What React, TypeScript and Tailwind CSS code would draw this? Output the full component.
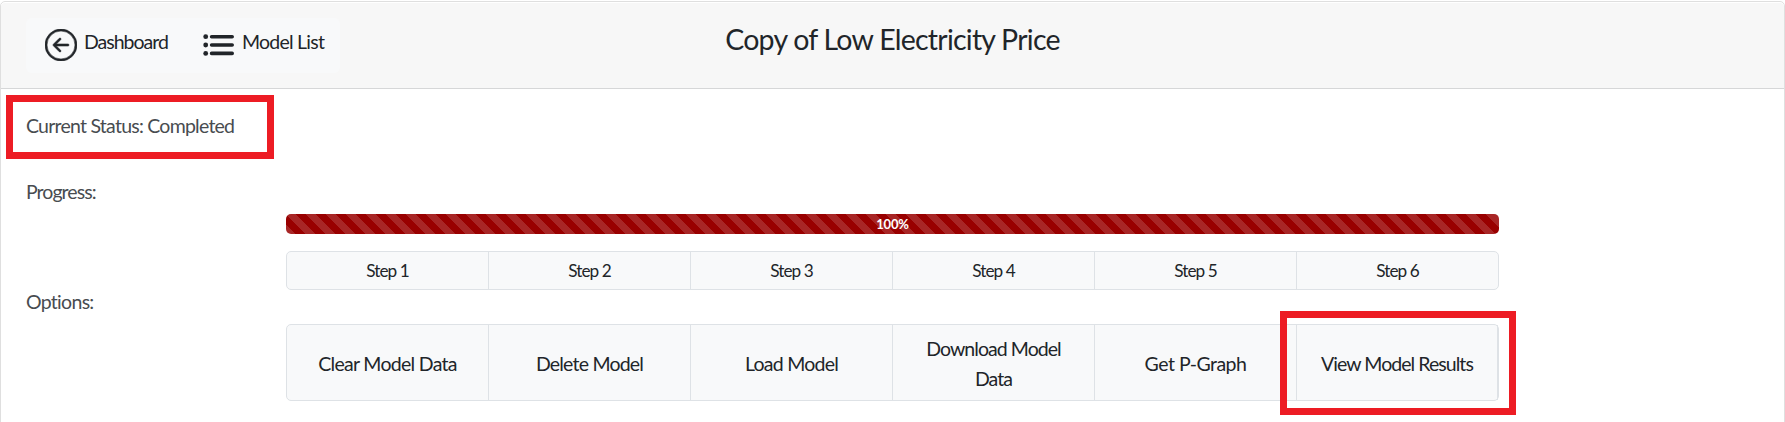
import React from "react";
import { BsArrowLeftCircle } from "react-icons/bs";

const steps = ["Step 1", "Step 2", "Step 3", "Step 4", "Step 5", "Step 6"];

const options = [
  { label: "Clear Model Data", tracking: "tracking-[-0.7px]" },
  { label: "Delete Model", tracking: "tracking-[-0.79px]" },
  { label: "Load Model", tracking: "tracking-[-0.75px]" },
  { label: "Download Model Data", tracking: "tracking-[-0.95px]" },
  { label: "Get P-Graph", tracking: "tracking-[-0.5px]" },
  { label: "View Model Results", tracking: "tracking-[-0.95px]" },
];

function ListIcon() {
  return (
    <svg viewBox="0 0 32 32" className="size-8 shrink-0" fill="currentColor">
      <circle cx="2.7" cy="7.7" r="2.4" />
      <circle cx="2.7" cy="16" r="2.4" />
      <circle cx="2.7" cy="24.4" r="2.4" />
      <path
        d="M8.6 7.7H29.2M8.6 16H29.2M8.6 24.4H29.2"
        stroke="currentColor"
        strokeWidth="3.6"
        strokeLinecap="round"
      />
    </svg>
  );
}

export default function App() {
  return (
    <div className="h-[422px] overflow-hidden bg-white pt-px font-[Lato,sans-serif] text-[19.5px] leading-[30px] text-[#212529]">
      <main className="h-[440px] w-[1785px] rounded-t-[5px] border border-[#dfdfdf] pt-px">
        <header className="grid h-[86px] grid-cols-[1fr_auto_1fr] items-start rounded-t-[4px] border-b border-[#d6d7d8] bg-[#f7f7f7] px-[25px] pt-[15px]">
          <nav className="flex h-[55px] w-[314px] items-start rounded-md bg-[#f8f9fa]">
            <a className="flex pt-[11px] pl-[19px]">
              <BsArrowLeftCircle className="size-8 shrink-0" stroke="currentColor" strokeWidth={0.3} />
              <span className="-mt-[2px] ml-[7px] tracking-[-1px] whitespace-nowrap">Dashboard</span>
            </a>
            <a className="flex pt-[11px] pl-[35px]">
              <ListIcon />
              <span className="-mt-[2px] ml-[7px] tracking-[-0.75px] whitespace-nowrap">Model List</span>
            </a>
          </nav>
          <h1 className="pt-px text-[28.5px] leading-[40px] tracking-[-0.76px] whitespace-nowrap">
            Copy of Low Electricity Price
          </h1>
          <div />
        </header>

        <section className="pt-[6px] pl-[5px] text-[#484c50]">
          <div className="h-16 w-[268px] border-[7px] border-[#ed1c24] pt-[9px] pl-[13px] tracking-[-0.76px] whitespace-nowrap">
            Current Status: Completed
          </div>
        </section>

        <div className="mt-[18px] flex">
          <div className="w-[285px] pl-[25px] text-[#484c50]">
            <p className="tracking-[-0.94px]">Progress:</p>
            <p className="mt-20 tracking-[-0.7px]">Options:</p>
          </div>

          <div className="w-[1213px] pt-[37px]">
            <div className="h-5 rounded-[5px] bg-[#990000] bg-[linear-gradient(45deg,rgba(255,255,255,.15)_25%,transparent_25%,transparent_50%,rgba(255,255,255,.15)_50%,rgba(255,255,255,.15)_75%,transparent_75%,transparent)] bg-[length:20px_20px] text-center text-[13px] leading-[21px] font-bold tracking-[-0.2px] text-white">
              100%
            </div>

            <div className="mt-[17px] grid h-[39px] grid-cols-[repeat(5,202px)_201px] divide-x divide-[#dee2e6] rounded-[5px] border border-[#dee2e6] bg-[#f8f9fa] text-[17.2px] leading-[38px] tracking-[-0.95px]">
              {steps.map((step) => (
                <div key={step} className="text-center">
                  {step}
                </div>
              ))}
            </div>

            <div className="relative mt-[34px] grid h-[77px] grid-cols-[repeat(5,202px)_201px] divide-x divide-[#dee2e6] rounded-[5px] border border-[#dee2e6] bg-[#f8f9fa]">
              {options.map(({ label, tracking }) => (
                <button key={label} className={`px-5 pt-[2px] text-center ${tracking}`}>
                  {label}
                </button>
              ))}
              <div className="absolute -top-[14px] -right-[18px] h-[104px] w-[236px] border-[7px] border-[#ed1c24]" />
            </div>
          </div>
        </div>
      </main>
    </div>
  );
}
